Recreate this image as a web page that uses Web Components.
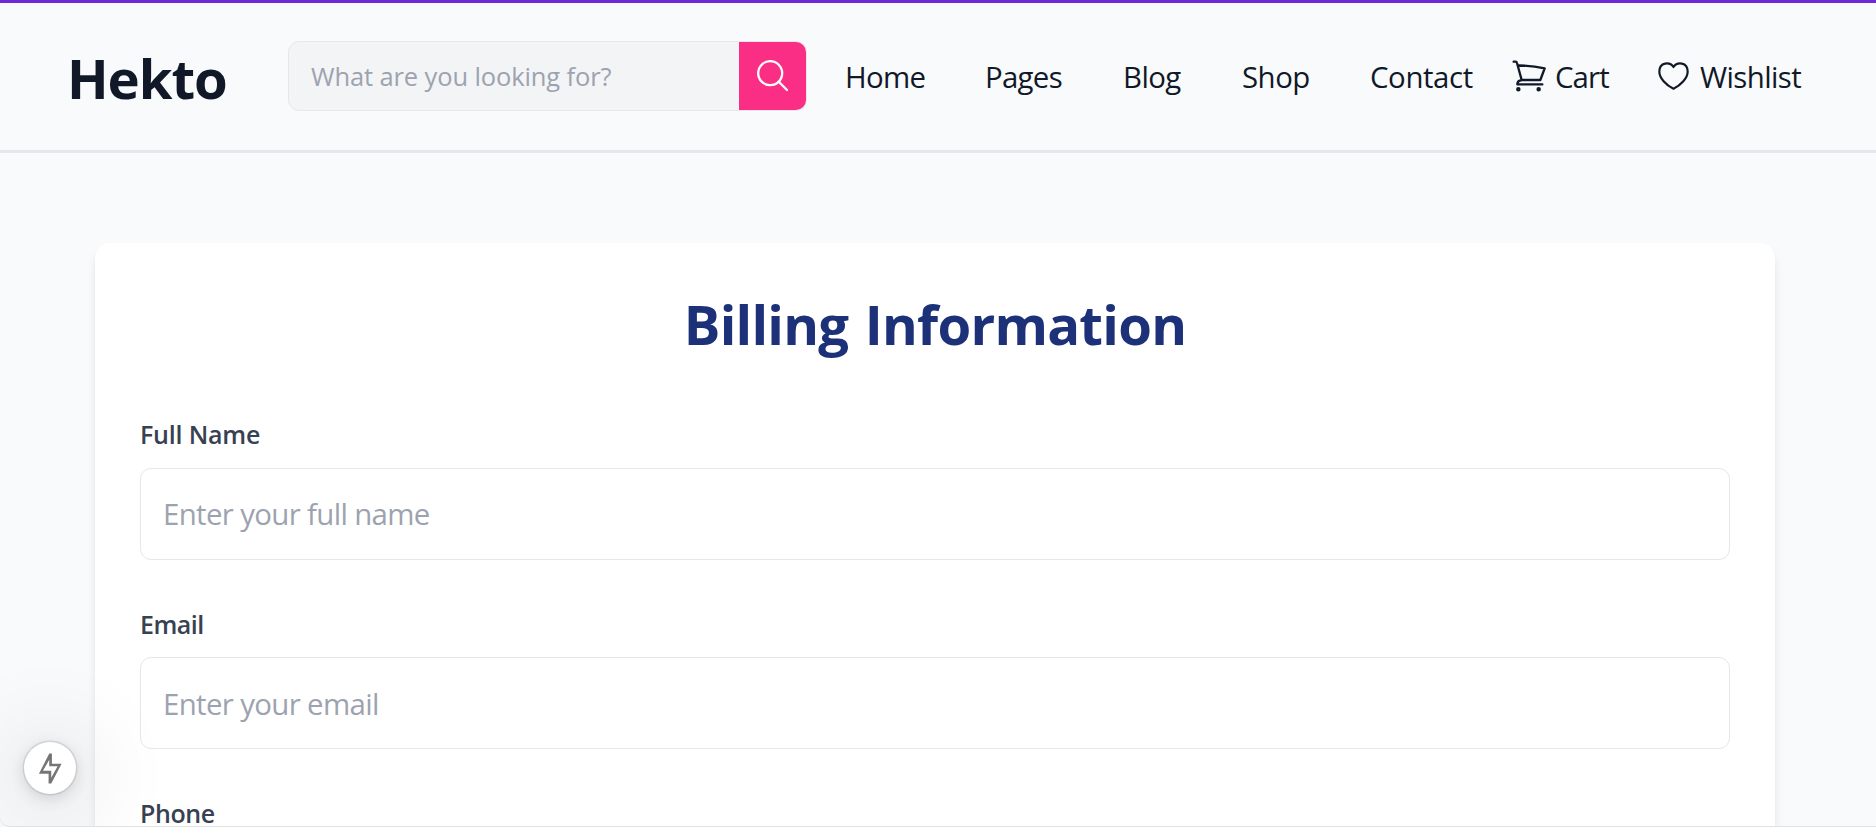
<!DOCTYPE html>
<html lang="en">
<head>
<meta charset="utf-8">
<title>Hekto</title>
<style>
  html, body { margin: 0; height: 100%; overflow: hidden; }
  body { background: #f9fafc; font-family: "Open Sans", "Noto Sans", sans-serif; color: #111827; }
</style>
</head>
<body>
<hekto-page>
  <site-header slot="header"></site-header>
  <billing-card heading="Billing Information">
    <form-field label="Full Name" placeholder="Enter your full name" style="--label-track:-.2px;--track:-.64px"></form-field>
    <form-field label="Email" placeholder="Enter your email" style="--label-track:-.5px;--track:-.64px;--drop:1px"></form-field>
    <form-field label="Phone" placeholder="Enter your phone number" style="--label-track:-.4px;--track:-.6px;--drop:1px"></form-field>
  </billing-card>
  <quick-action slot="overlay"></quick-action>
</hekto-page>

<script>
const define = (name, html, setup) => customElements.define(name, class extends HTMLElement {
  constructor() {
    super();
    const t = document.createElement('template');
    t.innerHTML = html;
    this.attachShadow({ mode: 'open' }).append(t.content.cloneNode(true));
  }
  connectedCallback() { if (setup) setup(this, this.shadowRoot); }
});

define('hekto-page', `
<style>
  :host { display: flex; flex-direction: column; box-sizing: border-box; height: 827px; position: relative; overflow: hidden; border-top: 3px solid #6d28d9; }
  main { flex: 1; min-height: 0; padding: 90px 101px 0 95px; }
  .edge { position: absolute; inset: auto 0 0 0; height: 12px; box-sizing: border-box; border-bottom: 1px solid #e0e1e3; border-bottom-left-radius: 10px; pointer-events: none; }
</style>
<slot name="header"></slot>
<main><slot></slot></main>
<slot name="overlay"></slot>
<div class="edge"></div>`);

define('search-box', `
<style>
  :host { display: flex; box-sizing: border-box; width: 519px; height: 70px; margin-bottom: 2px; border: 1px solid #e5e7eb; border-radius: 11px; overflow: hidden; background: #f3f4f6; }
  input { flex: 1; min-width: 0; border: 0; padding: 1px 22px 0; background: none; font: 25.5px/36px "Open Sans", sans-serif; letter-spacing: -.12px; color: #111827; outline: 0; }
  input::placeholder { color: #9ca3af; opacity: 1; }
  button { width: 67px; border: 0; padding: 0; background: #fb2e86; display: grid; place-items: center; }
  svg { display: block; width: 67px; height: 68px; }
</style>
<input placeholder="What are you looking for?">
<button aria-label="Search"><svg viewBox="0 0 67 68" fill="none" stroke="#fff" stroke-width="2.300" stroke-linecap="round"><circle cx="31.2" cy="31.2" r="12"/><path d="M40 40l8 8"/></svg></button>`);

define('nav-link', `
<style>
  :host { display: flex; align-items: center; font-size: 29.4px; line-height: 40px; white-space: nowrap; letter-spacing: var(--track, -.6px); }
  ::slotted(svg) { display: block; flex: none; }
</style>
<slot name="icon"></slot><span><slot></slot></span>`);

define('site-header', `
<style>
  :host { display: flex; align-items: center; box-sizing: border-box; height: 150px; flex: none; padding-left: 67px; border-bottom: 3px solid #e5e7eb; }
  .logo { width: 221px; font-size: 54.5px; font-weight: 700; line-height: 72px; padding-top: 3px; letter-spacing: -1.1px; }
  nav { margin-left: 38px; display: grid; grid-template-columns: 140px 138px 119px 128px 138px 149px auto; }
</style>
<div class="logo">Hekto</div>
<search-box></search-box>
<nav>
  <nav-link style="--track:-.7px">Home</nav-link>
  <nav-link style="--track:-.7px">Pages</nav-link>
  <nav-link>Blog</nav-link>
  <nav-link style="--track:-.5px">Shop</nav-link>
  <nav-link style="--track:-.4px">Contact</nav-link>
  <nav-link style="--track:-.9px"><svg slot="icon" width="47" height="40" viewBox="24 20 141 120" fill="none" stroke="#111827" stroke-width="7" stroke-linecap="round" stroke-linejoin="round"><path d="M41 34h6q3 0 4 4l14 51h56l13-35q-35-8-77-8.500M65 89q-13 2-13 13h75"/><circle cx="55" cy="117" r="3.300"/><circle cx="116" cy="117" r="3.300"/></svg>Cart</nav-link>
  <nav-link style="--track:-.6px"><svg slot="icon" width="43" height="40" viewBox="471 20 129 120" fill="none" stroke="#111827" stroke-width="6.500" stroke-linejoin="round" stroke-linecap="round"><path d="M520.500 50C510 34 478 34 478 64c0 19 20 40 42.500 51 22-11 42.500-32 42.500-51 0-30-32-30-42.500-14z"/></svg>Wishlist</nav-link>
</nav>`);

define('billing-card', `
<style>
  :host { display: flex; flex-direction: column; gap: 45px; box-sizing: border-box; min-height: 700px; padding: 45px; background: #fff; border-radius: 15px; box-shadow: 0 8px 12px -2px rgba(0,0,0,.1), 0 4px 8px -4px rgba(0,0,0,.1); }
  h1 { margin: 0 0 11px; text-align: center; font-size: 54.5px; line-height: 72px; font-weight: 700; letter-spacing: -.75px; word-spacing: 3px; color: #1c3178; }
</style>
<h1></h1>
<slot></slot>`, (el, root) => { root.querySelector('h1').textContent = el.getAttribute('heading'); });

define('form-field', `
<style>
  :host { display: flex; flex-direction: column; }
  label { font-size: 25px; line-height: 36px; height: 52px; box-sizing: border-box; padding-top: var(--drop, 0px); font-weight: 600; letter-spacing: var(--label-track); color: #374151; }
  input { box-sizing: border-box; width: 100%; height: 92px; padding: calc(var(--drop, 0px) * 2) 22px 0; border: 1px solid #e5e7eb; border-radius: 11px; background: #fff; outline: 0; font: 29.4px/40px "Open Sans", sans-serif; letter-spacing: var(--track); color: #111827; }
  input::placeholder { color: #9ca3af; opacity: 1; }
</style>
<label for="field"></label>
<input id="field">`, (el, root) => {
  root.querySelector('label').textContent = el.getAttribute('label');
  root.querySelector('input').placeholder = el.getAttribute('placeholder');
});

define('quick-action', `
<style>
  :host { position: absolute; left: 23.500px; top: 738.500px; width: 52.500px; height: 52.500px; border-radius: 50%; background: #fff; box-shadow: 0 0 0 1.500px rgba(23,23,23,.1), 0 4px 16px rgba(0,0,0,.14), 0 8px 90px 18px rgba(0,0,0,.1); }
  svg { display: block; width: 100%; height: 100%; }
</style>
<svg viewBox="71.250 304.500 157.500 157.500" fill="#757575" fill-rule="evenodd"><path d="M147 339h8v31h29l-31 59h-8v-29h-29zM147 358v19h25l-19 35v-21h-25z"/></svg>`);
</script>
</body>
</html>
